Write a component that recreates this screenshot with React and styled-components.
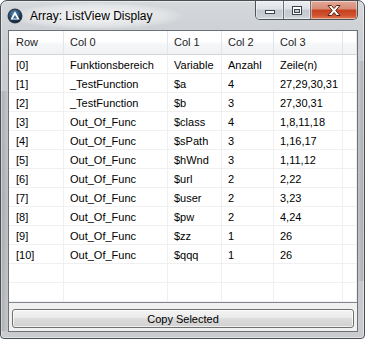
import React from 'react';
import styled, { createGlobalStyle } from 'styled-components';

const GlobalStyle = createGlobalStyle`
  html, body {
    margin: 0;
    padding: 0;
    overflow: hidden;
    background: #ffffff;
  }
`;

const Window = styled.div`
  position: relative;
  width: 365px;
  height: 339px;
  box-sizing: border-box;
  border: 1px solid #4a4d52;
  border-radius: 7px 7px 4px 4px;
  display: flex;
  flex-direction: column;
  font-family: "Liberation Sans", Arial, sans-serif;
  background:
    linear-gradient(90deg, rgba(90, 90, 90, 0.25) 0, rgba(140, 140, 140, 0.05) 7px, transparent 8px) left 90px / 8px 240px no-repeat,
    linear-gradient(270deg, rgba(90, 90, 90, 0.25) 0, rgba(140, 140, 140, 0.05) 6px, transparent 7px) right 60px / 7px 220px no-repeat,
    linear-gradient(180deg, #d6d9dc 0%, #cbced2 12%, #c2c5c9 60%, #c9cbce 100%);
  box-shadow: inset 0 0 0 1px rgba(255, 255, 255, 0.45);
  overflow: hidden;
`;

const TitleBar = styled.div`
  position: relative;
  height: 29px;
  display: flex;
  align-items: flex-start;
  padding-left: 6px;
  flex-shrink: 0;
`;

const Glow = styled.div`
  position: absolute;
  left: 10px;
  top: 2px;
  width: 170px;
  height: 26px;
  border-radius: 50%;
  background: radial-gradient(ellipse at center, rgba(255, 255, 255, 0.8) 0%, rgba(255, 255, 255, 0.35) 55%, rgba(255, 255, 255, 0) 75%);
  pointer-events: none;
`;

const AppIcon = styled.svg`
  position: relative;
  margin-top: 7px;
  flex-shrink: 0;
`;

const Title = styled.div`
  position: relative;
  margin-left: 7px;
  margin-top: 7px;
  font-family: "Liberation Sans", Arial, sans-serif;
  font-size: 12px;
  line-height: 16px;
  color: #000;
  white-space: nowrap;
`;

const Caption = styled.div`
  margin-left: auto;
  margin-right: 6px;
  display: flex;
  height: 18px;
  border: 1px solid #50545a;
  border-top: none;
  border-radius: 0 0 5px 5px;
  overflow: hidden;
`;

const CaptionButton = styled.div`
  width: ${p => p.w}px;
  height: 100%;
  display: flex;
  align-items: center;
  justify-content: center;
  box-sizing: border-box;
  border-left: ${p => (p.first ? 'none' : '1px solid #6a6e74')};
  box-shadow: inset 0 0 0 1px rgba(255, 255, 255, 0.45);
  background: ${p =>
    p.close
      ? 'linear-gradient(180deg, #e3a898 0%, #d78a75 45%, #c6401d 50%, #cf5230 80%, #e07a50 100%)'
      : 'linear-gradient(180deg, #eceef1 0%, #dde1e6 45%, #c4c9cf 50%, #c9ced4 85%, #d9dde2 100%)'};
`;

const Client = styled.div`
  flex: 1;
  margin: 0 6px 6px 7px;
  border: 1px solid #6d7177;
  background: #f0f0f0;
  display: flex;
  flex-direction: column;
  padding-bottom: 3px;
`;

const ListView = styled.div`
  background: #fff;
  border-bottom: 1px solid #828790;
  display: grid;
  grid-template-columns: 55px 104px 54px 52px 69px 14px;
  grid-template-rows: 24px;
  grid-auto-rows: 19px;
  font-size: 11px;
  color: #000;
`;

const HeaderCell = styled.div`
  box-sizing: border-box;
  padding-left: ${p => (p.first ? 7 : 6)}px;
  display: flex;
  align-items: center;
  padding-bottom: 1px;
  border-right: 1px solid #e2e5e9;
  border-bottom: 1px solid #d5d5d5;
  background: linear-gradient(180deg, #ffffff 0%, #ffffff 45%, #f6f7f8 55%, #f1f2f4 100%);
  white-space: nowrap;
  color: #1e1e1e;
`;

const Cell = styled.div`
  box-sizing: border-box;
  padding-left: ${p => (p.first ? 7 : 6)}px;
  display: flex;
  align-items: center;
  padding-top: 2px;
  border-right: 1px solid #f0f0f0;
  border-bottom: 1px solid #f0f0f0;
  white-space: nowrap;
  overflow: hidden;
`;

const CopyButton = styled.button`
  margin: 6px 3px 0 3px;
  height: 19px;
  padding: 0;
  border: 1px solid #707070;
  border-radius: 3px;
  background: linear-gradient(180deg, #f3f3f3 0%, #ebebeb 45%, #dddddd 50%, #cfcfcf 100%);
  box-shadow: inset 0 0 0 1px rgba(255, 255, 255, 0.7);
  font-family: "Liberation Sans", Arial, sans-serif;
  font-size: 11px;
  color: #000;
  line-height: 16px;
`;

const columns = ['Row', 'Col 0', 'Col 1', 'Col 2', 'Col 3', ''];

const rows = [
  ['[0]', 'Funktionsbereich', 'Variable', 'Anzahl', 'Zeile(n)'],
  ['[1]', '_TestFunction', '$a', '4', '27,29,30,31'],
  ['[2]', '_TestFunction', '$b', '3', '27,30,31'],
  ['[3]', 'Out_Of_Func', '$class', '4', '1,8,11,18'],
  ['[4]', 'Out_Of_Func', '$sPath', '3', '1,16,17'],
  ['[5]', 'Out_Of_Func', '$hWnd', '3', '1,11,12'],
  ['[6]', 'Out_Of_Func', '$url', '2', '2,22'],
  ['[7]', 'Out_Of_Func', '$user', '2', '3,23'],
  ['[8]', 'Out_Of_Func', '$pw', '2', '4,24'],
  ['[9]', 'Out_Of_Func', '$zz', '1', '26'],
  ['[10]', 'Out_Of_Func', '$qqq', '1', '26'],
  ['', '', '', '', ''],
  ['', '', '', '', ''],
];

const AutoItIcon = () => (
  <AppIcon width="16" height="16" viewBox="0 0 16 16">
    <defs>
      <radialGradient id="ai" cx="45%" cy="35%" r="65%">
        <stop offset="0%" stopColor="#6f9ac2" />
        <stop offset="60%" stopColor="#234a70" />
        <stop offset="100%" stopColor="#0e2236" />
      </radialGradient>
    </defs>
    <circle cx="8" cy="8" r="7.5" fill="#3b3f45" />
    <circle cx="8" cy="8" r="6.6" fill="url(#ai)" />
    <path
      d="M8 3.2 L12.6 11.6 L3.4 11.6 Z M8 7 L10.2 10.4 L5.8 10.4 Z"
      fill="#ffffff"
      fillRule="evenodd"
    />
  </AppIcon>
);

const MinGlyph = () => (
  <svg width="10" height="10" viewBox="0 0 10 10">
    <rect x="0.5" y="5.5" width="9" height="3" fill="#fff" stroke="#3d4148" />
  </svg>
);

const MaxGlyph = () => (
  <svg width="10" height="9" viewBox="0 0 10 9">
    <rect x="0.5" y="0.5" width="9" height="8" fill="#fff" stroke="#3d4148" />
    <rect x="2.5" y="3.5" width="5" height="3" fill="#c9ced4" stroke="#3d4148" />
  </svg>
);

const CloseGlyph = () => (
  <svg width="14" height="11" viewBox="0 0 14 11">
    <path
      d="M1 0.5 L4.5 0.5 L7 3.5 L9.5 0.5 L13 0.5 L8.8 5.5 L13 10.5 L9.5 10.5 L7 7.5 L4.5 10.5 L1 10.5 L5.2 5.5 Z"
      fill="#ffffff"
      stroke="#5a2113"
      strokeWidth="1"
      strokeLinejoin="round"
    />
  </svg>
);

export default function App() {
  return (
    <>
      <GlobalStyle />
      <Window>
        <TitleBar>
          <Glow />
          <AutoItIcon />
          <Title>Array: ListView Display</Title>
          <Caption>
            <CaptionButton first w={27}>
              <MinGlyph />
            </CaptionButton>
            <CaptionButton w={27}>
              <MaxGlyph />
            </CaptionButton>
            <CaptionButton close w={47}>
              <CloseGlyph />
            </CaptionButton>
          </Caption>
        </TitleBar>
        <Client>
          <ListView>
            {columns.map((c, i) => (
              <HeaderCell key={i} first={i === 0}>{c}</HeaderCell>
            ))}
            {rows.map((r, ri) =>
              [...r, ''].map((v, ci) => (
                <Cell key={ri + '-' + ci} first={ci === 0}>{v}</Cell>
              ))
            )}
          </ListView>
          <CopyButton>Copy Selected</CopyButton>
        </Client>
      </Window>
    </>
  );
}
